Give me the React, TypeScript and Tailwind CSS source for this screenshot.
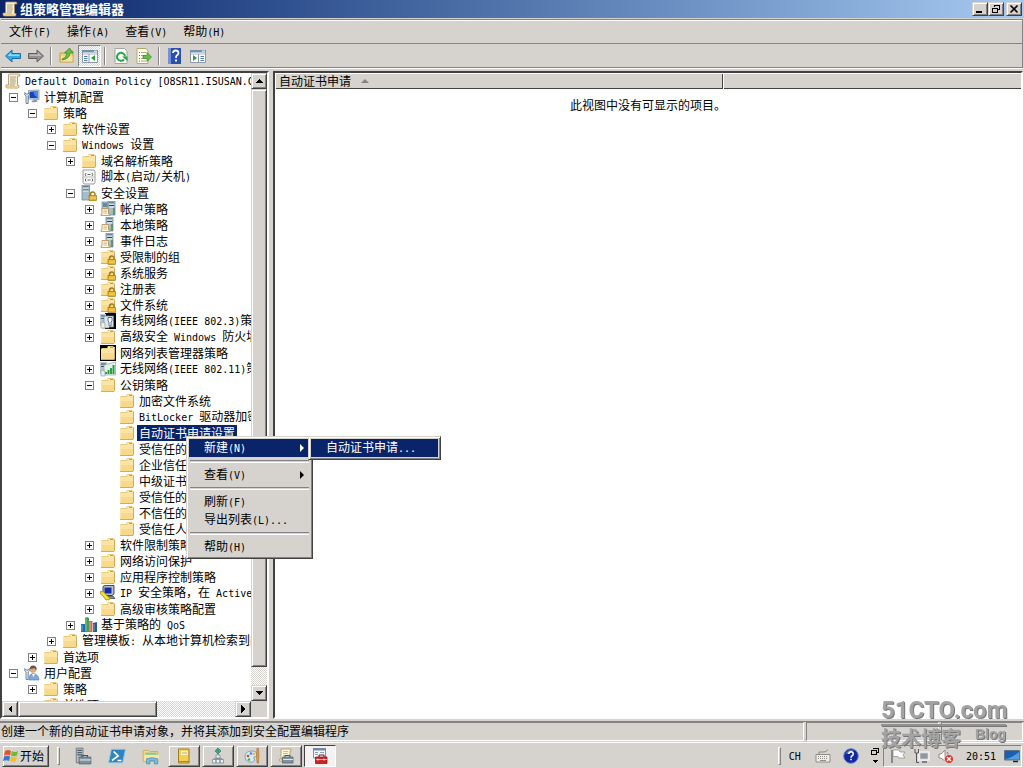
import type { ReactNode } from "react"

type Node = {
  label: string
  icon: string
  open?: boolean
  leaf?: boolean
  selected?: boolean
  children?: Node[]
}

const closed = (label: string, icon = "folder"): Node => ({ label, icon })
const leaf = (label: string, icon = "folder", selected = false): Node => ({ label, icon, leaf: true, selected })
const opened = (label: string, icon: string, children: Node[]): Node => ({ label, icon, open: true, children })

const tree: Node[] = [
  opened("计算机配置", "computer", [
    opened("策略", "folder", [
      closed("软件设置"),
      opened("Windows 设置", "folder", [
        closed("域名解析策略"),
        leaf("脚本(启动/关机)", "script"),
        opened("安全设置", "serverLock", [
          closed("帐户策略", "servers"),
          closed("本地策略", "serverDoc"),
          closed("事件日志", "serverDoc"),
          closed("受限制的组", "folderLock"),
          closed("系统服务", "folderLock"),
          closed("注册表", "folderLock"),
          closed("文件系统", "folderLock"),
          closed("有线网络(IEEE 802.3)策略", "wired"),
          closed("高级安全 Windows 防火墙"),
          leaf("网络列表管理器策略", "folderDark"),
          closed("无线网络(IEEE 802.11)策略", "wireless"),
          opened("公钥策略", "folder", [
            leaf("加密文件系统"),
            leaf("BitLocker 驱动器加密"),
            leaf("自动证书申请设置", "folder", true),
            leaf("受信任的根证书颁发机构"),
            leaf("企业信任"),
            leaf("中级证书颁发机构"),
            leaf("受信任的发布者"),
            leaf("不信任的证书"),
            leaf("受信任人"),
          ]),
          closed("软件限制策略"),
          closed("网络访问保护"),
          closed("应用程序控制策略"),
          closed("IP 安全策略，在 Active Directory", "ipsec"),
          closed("高级审核策略配置"),
        ]),
        closed("基于策略的 QoS", "qos"),
      ]),
      closed("管理模板: 从本地计算机检索到的"),
    ]),
    closed("首选项"),
  ]),
  opened("用户配置", "user", [closed("策略"), closed("首选项")]),
]

const raised =
  "border border-t-[#d6d3ce] border-l-[#d6d3ce] border-r-[#424142] border-b-[#424142] shadow-[inset_1px_1px_#fff,inset_-1px_-1px_#848284] bg-[#d6d3ce]"
const sunken = "border border-t-[#848284] border-l-[#848284] border-r-white border-b-white"
const checker = "bg-[repeating-conic-gradient(#fff_0_25%,#d6d3ce_0_50%)] bg-[length:2px_2px]"

// Latin runs are half the width of a Chinese character
function Text({ children }: { children: string }) {
  return (
    <span className="whitespace-pre">
      {children.split(/([\x20-\x7e]+)/).map((part, i) =>
        i % 2 ? (
          <span key={i} className="font-['DejaVu_Sans_Mono',monospace] text-[10px]">{part}</span>
        ) : (
          part
        )
      )}
    </span>
  )
}

function Svg({ children, size = "size-4" }: { children: ReactNode; size?: string }) {
  return (
    <svg viewBox="0 0 16 16" className={`${size} shrink-0`} aria-hidden="true">
      {children}
    </svg>
  )
}

const folderShape = (
  <>
    <path d="M7 3L8 1H13L14 2H15V14L14 15H1V4L2 3Z" fill="#ecca7c" />
    <path d="M1 4H8L9 3H14V14H1Z" fill="#fbe5a6" />
    <path d="M2 8H14V14H2Z" fill="#f8d98a" />
    <path d="M8 2H13V3H8Z" fill="#fff3cb" />
    <path d="M10 2H13V3H10Z" fill="#9aa39c" />
    <path d="M1 14.500H14M14.500 3V14" stroke="#d2ad5e" />
  </>
)

const lockShape = (
  <>
    <path d="M9.500 11V9.500Q9.500 7 11.800 7T14 9.500V11" fill="none" stroke="#a37818" strokeWidth="1.400" />
    <rect x="8" y="10.500" width="7.500" height="5" fill="#e8ae21" stroke="#9c6c10" strokeWidth=".6" />
    <path d="M9 12H15M9 13.500H15" stroke="#ffdf6b" strokeWidth=".6" />
  </>
)

const serverShape = (
  <>
    <rect x="6" y="0" width="7" height="14" fill="#a9bdc9" stroke="#66808f" strokeWidth=".7" />
    <path d="M7 2H12M7 4.500H12" stroke="#23485c" />
    <path d="M7 3H12M7 6H12" stroke="#f2f8fb" />
    <path d="M11 7H13V14H11Z" fill="#71838c" />
    <circle cx="11.500" cy="11.500" r="1" fill="#39c05a" />
  </>
)

const docShape = (
  <>
    <path d="M2 7.500H8.500V13H10V14.500H1V13H2Z" fill="#fff5dc" stroke="#b18f5c" strokeWidth=".8" />
    <path d="M3.500 9H7M3.500 10.500H7M3.500 12H7" stroke="#d4b787" strokeWidth=".8" />
  </>
)

const scrollShape = (
  <>
    <path d="M4 1H14Q15 1 15 3H12.500V12.500H14V14Q14 15 12.500 15H2.500Q1 15 1 13.500V12H3.500V3Q3.500 1 4 1Z" fill="#fcf0cc" stroke="#a48d58" strokeWidth=".8" />
    <path d="M5 4H11M5 6H10.500M5 8H11M5 10H10.500M4.500 12H10" stroke="#8c8c83" strokeWidth=".8" />
    <path d="M1.500 13H12V14.500H2.500Z" fill="#e7cb82" />
  </>
)

const monitorShape = (
  <>
    <path d="M4.500 1.500L15 1V10.500L4.500 10Z" fill="#d7dfe6" stroke="#71859b" strokeWidth=".7" />
    <path d="M5.700 2.700L14 2V9.200L5.700 9Z" fill="#1644ba" />
    <path d="M9.500 2.500L14 2V9Q10 7 9.500 2.500Z" fill="#4c86e8" />
    <path d="M7 12L12 10.500L14 12.500L9 13.500Z" fill="#8997a6" />
  </>
)

const toolShape = (
  <path d="M.8 3.500V6L2 7V14.500H4.200V7L5.300 6V3.500L4 5H2.200Z" fill="#dfe9f0" stroke="#527089" strokeWidth=".8" />
)

const icons: Record<string, ReactNode> = {
  folder: folderShape,
  folderLock: <>{folderShape}{lockShape}</>,
  folderDark: <><path d="M0 0H16V16H0Z" fill="#000" />{folderShape}</>,
  script: (
    <>
      <path d="M2 1H13L14 2.500V13.500L13 15H3L2 13.500Z" fill="#fafafa" stroke="#9a9a9a" />
      <path d="M5 4Q3.500 5.500 5 7M11 4Q12.500 5.500 11 7M5 9.500Q3.500 11 5 12.500M11 9.500Q12.500 11 11 12.500M6.500 5.500H9.500M6.500 11H9.500" fill="none" stroke="#555" strokeWidth=".9" />
      <path d="M2 8H14" stroke="#bbb" />
    </>
  ),
  serverLock: (
    <>
      <rect x="1" y="0" width="7.500" height="15" fill="#a6bdcb" stroke="#69818f" strokeWidth=".7" />
      <path d="M2 2H7.500M2 5H7.500" stroke="#23485c" />
      <path d="M2 3H7.500M2 6H7.500" stroke="#f2f8fb" />
      {lockShape}
    </>
  ),
  servers: (
    <>
      <rect x="2" y="1" width="6.500" height="9" fill="#b4c7d1" stroke="#66808f" strokeWidth=".7" />
      <path d="M3 3H7.500M3 5H7.500" stroke="#23485c" />
      <g transform="translate(2 0)">{serverShape}</g>
      {docShape}
    </>
  ),
  serverDoc: <>{serverShape}{docShape}</>,
  wired: (
    <>
      <path d="M5 0H16V16H5Z" fill="#000" />
      <rect x="0" y="1" width="6" height="12" fill="#b7c7d0" />
      <path d="M1 3H5M1 5.500H5" stroke="#45606f" />
      <path d="M4 3H13.500V14H9V15H2V13H4Z" fill="#dbe8ef" stroke="#768b98" strokeWidth=".7" />
      <path d="M8 4.500H12V8L11 9V13H9V9L8 8Z" fill="#fff" stroke="#3c5a6c" strokeWidth=".8" />
      <path d="M1 9L5 10V15H1Z" fill="#f3efe2" stroke="#97958a" strokeWidth=".6" />
    </>
  ),
  wireless: (
    <>
      <rect x="0" y="1" width="7" height="12" fill="#b7c7d0" />
      <path d="M1 3H6M1 5.500H6" stroke="#36505f" />
      <path d="M4 4L15.500 1V14H4Z" fill="#e3efe7" stroke="#8fa39b" strokeWidth=".7" />
      <path d="M6 13V11M8.500 13V9M11 13V7M13.500 13V4" stroke="#219a45" strokeWidth="1.900" />
      <path d="M1 9L5 10V15H1Z" fill="#e7eef2" stroke="#8297a3" strokeWidth=".6" />
    </>
  ),
  computer: <>{monitorShape}{toolShape}</>,
  user: (
    <>
      <path d="M5 15Q4.500 9 9 8.500Q14.500 9 15 15Z" fill="#7fa9d8" stroke="#4d78ad" strokeWidth=".6" />
      <circle cx="9" cy="4.500" r="3.300" fill="#dba67a" />
      <path d="M5.800 4Q6 .5 9.500.6Q13 1 12.500 5Q11 4.500 10.500 3Q8 4 5.800 4Z" fill="#655346" />
      <path d="M8 9L9.500 12L11 9Z" fill="#fff" />
      {toolShape}
    </>
  ),
  ipsec: (
    <>
      <path d="M3 1.500L5 .5H14V9L12 10.500H3Z" fill="#bcbfca" stroke="#222" strokeWidth=".8" />
      <path d="M4.500 2.500H11.500V8.500H4.500Z" fill="#112ca5" />
      <path d="M4 11H13L15 13.500H6Z" fill="#8a8e9a" stroke="#222" strokeWidth=".6" />
      <path d="M.5 6.500Q3 5 4.500 8L10 13.500L9 15L7.500 14.500L6 15L3 11Q0 10 .5 6.500Z" fill="#f5e332" stroke="#8b7a00" strokeWidth=".7" />
    </>
  ),
  qos: (
    <>
      <path d="M0 7H4V15H0Z" fill="#1d6dae" />
      <path d="M4 1L6 0L8 1V15H4Z" fill="#3f9e51" />
      <path d="M8 4H11.500V15H8Z" fill="#d7674a" />
      <path d="M12 6L16 5V15H12Z" fill="#245a93" />
      <path d="M1 8V14M5 2V14M9 5V14M13 7V14" stroke="#fff" strokeOpacity=".4" />
    </>
  ),
}

function TreeItem({ node }: { node: Node }) {
  return (
    <li>
      <div className="flex h-4 items-center gap-1">
        <span className="w-[15px] shrink-0 pl-1">
          {!node.leaf && (
            <button aria-label={node.open ? "折叠" : "展开"} className="block size-[9px]">
              <svg viewBox="0 0 9 9" className="size-[9px]" shapeRendering="crispEdges">
                <path d="M.5.5H8.500V8.500H.5Z" fill="#fff" stroke="#848284" />
                <path d={node.open ? "M2 4.500H7" : "M2 4.500H7M4.500 2V7"} stroke="#000" />
              </svg>
            </button>
          )}
        </span>
        <Svg>{icons[node.icon]}</Svg>
        <span className={node.selected ? "-mx-0.5 bg-[#0a246a] px-0.5 text-white" : ""}>
          <Text>{node.label}</Text>
        </span>
      </div>
      {node.children && (
        <ul className="pl-[19px]">
          {node.children.map((child, i) => <TreeItem key={i} node={child} />)}
        </ul>
      )}
    </li>
  )
}

function ScrollButton({ d, label }: { d: string; label: string }) {
  return (
    <button aria-label={label} className={`flex size-4 shrink-0 items-center justify-center ${raised}`}>
      <svg viewBox="0 0 8 8" className="size-2" shapeRendering="crispEdges"><path d={d} /></svg>
    </button>
  )
}

function Divider() {
  return <span className="mx-[3px] h-[18px] w-0.5 shrink-0 border-l border-l-[#848284] border-r border-r-white" />
}

function ToolButton({ label, pressed, children }: { label: string; pressed?: boolean; children: ReactNode }) {
  return (
    <button
      aria-label={label}
      className={`flex h-[22px] w-[23px] items-center justify-center ${pressed ? `${sunken} ${checker}` : ""}`}
    >
      <Svg>{children}</Svg>
    </button>
  )
}

const paneIcon = (arrow: string, left: boolean) => (
  <>
    <path d="M.5 2.500H15.500V14.500H.5Z" fill="#fff" stroke="#8e9aa8" />
    <path d="M0 2H16V4.500H0Z" fill="#7790ae" />
    <path d="M12 3.200H15" stroke="#fff" />
    <path d="M1 6H15" stroke="#a8b6c5" />
    <path d={left ? "M7 6V14" : "M8.500 6V14"} stroke="#8e9aa8" />
    <path d={left ? "M2 8.500H5.500M2 10.500H5.500M2 12.500H5.500" : "M10.500 8.500H14M10.500 10.500H14M10.500 12.500H14"} stroke="#4d7fb5" />
    <path d={arrow} fill="#2e9e3c" />
  </>
)

function Toolbar() {
  return (
    <div className="flex h-6 items-center border-b border-[#848284]">
      <ToolButton label="后退">
        <path d="M.5 8L7 2V5.500H15.500V10.500H7V14Z" fill="#38a9e4" stroke="#186fa7" />
        <path d="M2.500 8L6 4.500V6.500H14.500V8Z" fill="#8bdafb" />
      </ToolButton>
      <ToolButton label="前进">
        <path d="M15.500 8L9 2V5.500H.5V10.500H9V14Z" fill="#929292" stroke="#5e5e5e" />
        <path d="M13.500 8L10 4.500V6.500H1.500V8Z" fill="#bdbdbd" />
      </ToolButton>
      <Divider />
      <ToolButton label="上移">
        <path d="M1 5H7L8 3H14V14H1Z" fill="#f4d27b" stroke="#c39b45" />
        <path d="M2 8H13.500V13.500H2Z" fill="#fae29c" />
        <path d="M3 11Q7.500 10 8 5H5.500L10.500 0L14 5H11Q10.500 11 3 12Z" fill="#67bf3b" stroke="#35842a" strokeWidth=".7" />
      </ToolButton>
      <ToolButton label="显示/隐藏控制台树" pressed>{paneIcon("M13 7V13L9 10Z", true)}</ToolButton>
      <Divider />
      <ToolButton label="刷新">
        <path d="M2 .5H11.500L14 3V15.500H2Z" fill="#fff" stroke="#a0a8a0" />
        <path d="M11 11.500A4 4 0 1 1 12 8.500" fill="none" stroke="#2fa344" strokeWidth="2" />
        <path d="M9 8.500H14.500V13Z" fill="#2fa344" />
      </ToolButton>
      <ToolButton label="导出列表">
        <path d="M1 .5H10L12 3V15.500H1Z" fill="#fffdf0" stroke="#b8a86c" />
        <path d="M3 4.500H4M3 7.500H4M3 10.500H4M3 13H4" stroke="#3e8a3e" />
        <path d="M5 4.500H10M5 7.500H9M5 10.500H9M5 13H10" stroke="#b6a878" />
        <path d="M7 7.500H11V4.500L15.500 9L11 13.500V10.500H7Z" fill="#66c044" stroke="#38882b" strokeWidth=".7" />
      </ToolButton>
      <Divider />
      <ToolButton label="帮助">
        <path d="M1.500 0H14V16H1.500Z" fill="#2b4faf" />
        <path d="M1.500 0H4V16H1.500Z" fill="#6f90dc" />
        <path d="M6 5Q6 2.500 8.700 2.500T11.500 5Q11.500 6.500 9.800 7.500Q9 8 9 10" fill="none" stroke="#fff" strokeWidth="1.800" />
        <path d="M8 11.500H10V13.500H8Z" fill="#fff" />
      </ToolButton>
      <ToolButton label="显示/隐藏操作窗格">{paneIcon("M3 7V13L7 10Z", false)}</ToolButton>
    </div>
  )
}

function MenuItem({ label, active, arrow }: { label: string; active?: boolean; arrow?: boolean }) {
  return (
    <button className={`flex h-[18px] w-full items-center justify-between pr-1.5 pl-[15px] ${active ? "bg-[#0a246a] text-white" : ""}`}>
      <Text>{label}</Text>
      {arrow && (
        <svg viewBox="0 0 4 8" className="h-2 w-1" fill="currentColor"><path d="M0 0L4 4L0 8Z" /></svg>
      )}
    </button>
  )
}

function MenuLine() {
  return <div className="mx-px my-[3px] h-[3px] border-t border-b border-t-[#848284] border-b-white" />
}

function ContextMenu() {
  return (
    <>
      <div className={`absolute top-[436px] left-[186px] w-[127px] p-0.5 ${raised}`}>
        <MenuItem label="新建(N)" active arrow />
        <MenuLine />
        <MenuItem label="查看(V)" arrow />
        <MenuLine />
        <MenuItem label="刷新(F)" />
        <MenuItem label="导出列表(L)..." />
        <MenuLine />
        <MenuItem label="帮助(H)" />
      </div>
      <div className={`absolute top-[436px] left-[308px] w-[133px] p-0.5 ${raised}`}>
        <MenuItem label="自动证书申请..." active />
      </div>
    </>
  )
}

function TaskButton({ label, pressed, children }: { label: string; pressed?: boolean; children: ReactNode }) {
  return (
    <button
      aria-label={label}
      className={`flex h-[22px] w-8 items-center justify-center ${
        pressed ? "border border-t-[#424142] border-l-[#424142] border-r-white border-b-white bg-[#f4f3f1]" : raised
      }`}
    >
      <Svg>{children}</Svg>
    </button>
  )
}

const toolbox = (
  <>
    <path d="M7 9V7.500H12V9" fill="none" stroke="#48525a" />
    <path d="M4.500 9H15V15H4.500Z" fill="#81929f" stroke="#4e5d68" strokeWidth=".7" />
    <path d="M5 11.500H15" stroke="#dce4e9" />
  </>
)

function Taskbar() {
  return (
    <footer className="flex h-[26px] shrink-0 items-center border-t border-white pl-0.5">
      <button className={`flex h-[22px] w-[47px] items-center gap-px ${raised}`}>
        <Svg>
          <path d="M2 3Q5 1 8 3L7 7.500Q4 6 1 7.500Z" fill="#e65527" />
          <path d="M9 3Q12 5 15 3L14 7.500Q11 9 8 7.500Z" fill="#71b935" />
          <path d="M1 8.500Q4 7 7 8.500L6 13Q3 11.500 0 13Z" fill="#3976d2" />
          <path d="M8 8.500Q11 10 14 8.500L13 13Q10 15 7 13Z" fill="#f7bd27" />
        </Svg>
        开始
      </button>
      <span className="mr-3.5 ml-2 h-[18px] w-[3px] border border-t-white border-l-white border-r-[#848284] border-b-[#848284]" />
      <div className="flex items-center gap-4 pr-2">
        <button aria-label="服务器管理器" className="flex">
          <Svg size="size-[18px]">
            <path d="M2 1H8V14H2Z" fill="#b5bec3" stroke="#6d7a81" strokeWidth=".8" />
            <path d="M3 3H7M3 5H7M3 7H7" stroke="#50616b" />
            {toolbox}
          </Svg>
        </button>
        <button aria-label="PowerShell" className="flex">
          <Svg size="size-[18px]">
            <path d="M3 2H15.500L13 14H.5Z" fill="#2f83be" stroke="#90c6e5" strokeWidth=".8" />
            <path d="M5 4L9 8L3.500 12M8.500 12H12" fill="none" stroke="#fff" strokeWidth="1.500" />
          </Svg>
        </button>
        <button aria-label="资源管理器" className="flex">
          <Svg size="size-[18px]">
            <path d="M1 3H6L7 4H14V13H1Z" fill="#f4d77d" stroke="#caa656" strokeWidth=".7" />
            <path d="M3 5H13V8H3Z" fill="#85c9a2" />
            <path d="M2 7H15V12H2Z" fill="#f9e79f" />
            <path d="M4 15V10.500Q9 8.500 14 10.500V15H11V12H7V15Z" fill="#77bde2" stroke="#4189b3" strokeWidth=".6" />
          </Svg>
        </button>
      </div>
      <div className="flex gap-0.5">
        <TaskButton label="记事本">
          <path d="M2.500 1H13V15H2.500Z" fill="#f5cf52" stroke="#9e7c27" />
          <path d="M5 3H12V7H5Z" fill="#fff8cf" />
          <path d="M2 13.500H13" stroke="#b08627" />
          <path d="M6 5H11" stroke="#c0a95d" />
        </TaskButton>
        <TaskButton label="网络">
          <path d="M8 0L11 3L8 6L5 3Z" fill="#3ba47e" stroke="#24705b" strokeWidth=".6" />
          <path d="M8 6V8M4 12V10.500H12V12" fill="none" stroke="#8c979e" />
          <path d="M6 7H10V10H6ZM2.500 11.500H6V15H2.500ZM6 11.500H10V15H6ZM10 11.500H13.500V15H10Z" fill="#eef2f4" stroke="#7c8a93" strokeWidth=".8" />
        </TaskButton>
        <TaskButton label="画图">
          <path d="M1 9Q1 3 8 3Q13 3 13 7Q12 9 10 9Q9 11 11 12Q9 15 5 14Q1 13 1 9Z" fill="#d9eaf4" stroke="#6b94ad" strokeWidth=".8" />
          <circle cx="4" cy="8" r="1.300" fill="#c94839" /><circle cx="7" cy="5.500" r="1.300" fill="#3a8dd1" />
          <circle cx="5" cy="11.500" r="1.300" fill="#4dab4b" /><circle cx="10" cy="6" r="1.200" fill="#e8b730" />
          <path d="M13 0H14.500L15 7L14.500 15H13L12.500 7Z" fill="#e39a42" stroke="#a36521" strokeWidth=".5" />
        </TaskButton>
        <TaskButton label="组策略管理">
          <path d="M3 1H13V3H12V11H1.500V13H8V11H3Z" fill="#fff5d8" stroke="#ae955e" strokeWidth=".8" />
          <path d="M5 3.500H10M5 5.500H10M5 7.500H10" stroke="#c5ae7b" strokeWidth=".8" />
          {toolbox}
        </TaskButton>
        <TaskButton label="组策略管理编辑器" pressed>
          <path d="M1.500.5H13.500V10H1.500Z" fill="#f6f8fa" stroke="#8695a5" />
          <path d="M1 0H14V2.500H1Z" fill="#6f89a8" />
          <path d="M3 4.500H6M8 4.500H12M3 6.500H6" stroke="#8ba0b4" />
          <path d="M7 9V7H12V9" fill="none" stroke="#6a1414" />
          <path d="M3.500 9H15V15.500H3.500Z" fill="#c92525" stroke="#811212" strokeWidth=".7" />
          <path d="M4 11.500H15" stroke="#f6a2a2" />
          <path d="M6 10.500V12.500M12 10.500V12.500" stroke="#fff" />
        </TaskButton>
      </div>
      <div className="ml-auto flex h-full items-center">
        <span className="mr-2 h-[18px] w-[3px] border border-t-white border-l-white border-r-[#848284] border-b-[#848284]" />
        <button className="mr-3.5"><Text>CH</Text></button>
        <button aria-label="键盘" className="mr-3">
          <Svg>
            <path d="M1 6.500H15V14H1Z" fill="#f0efed" stroke="#8c8b88" />
            <path d="M3 8.500H13M3 10.500H13" stroke="#8c8b88" strokeDasharray="1 1" />
            <path d="M5 12.500H11M4 6V4H9Q11 4 13 1.500" fill="none" stroke="#8c8b88" />
          </Svg>
        </button>
        <button aria-label="帮助" className="mr-3">
          <Svg>
            <circle cx="8" cy="8" r="7.300" fill="#12299b" stroke="#6e83cd" />
            <path d="M2.500 6Q5 .5 11 2.500Q8 6 2.500 6Z" fill="#5470d0" />
            <path d="M5.800 6Q6 3.800 8 3.800T10.300 6Q10.300 7.200 8.800 8Q8 8.500 8 9.700" fill="none" stroke="#fff" strokeWidth="1.500" />
            <path d="M7.200 10.800H8.800V12.300H7.200Z" fill="#fff" />
          </Svg>
        </button>
        <button aria-label="语言栏选项" className="mr-1">
          <svg viewBox="0 0 8 18" className="h-[18px] w-2" shapeRendering="crispEdges">
            <path d="M2.500 2V1.500H7.500V5.500H6M.5 3.500H5.500V7.500H.5Z" fill="none" stroke="#000" />
            <path d="M1 13H7L4 16Z" />
          </svg>
        </button>
        <div className={`mr-0.5 flex h-[22px] items-center pr-px pl-1.5 ${sunken}`}>
          <button aria-label="操作中心" className="mr-2 flex">
            <Svg>
              <path d="M2 2V15" stroke="#6d7178" strokeWidth="1.500" />
              <path d="M3 2H9L10 4H15L13 7L15 10H9L8 8.500H3Z" fill="#fff" stroke="#8d9095" strokeWidth=".8" />
            </Svg>
          </button>
          <button aria-label="网络" className="mr-2 flex">
            <Svg>
              <path d="M5 4H15V12H5Z" fill="#c4c8cd" stroke="#fff" strokeWidth="1.200" />
              <path d="M6.500 5.500H13.500V10.500H6.500Z" fill="#91979f" />
              <path d="M8 14H13" stroke="#666" strokeWidth="1.500" />
              <path d="M1 1V5H2.500V14.500H5M4.500 1V5H2.500" fill="none" stroke="#555" />
            </Svg>
          </button>
          <button aria-label="音量" className="mr-3 flex">
            <Svg>
              <path d="M1 6H3L7 2V13L3 10H1Z" fill="#fff" stroke="#777" strokeWidth=".8" />
              <path d="M9 4Q11 6 10 8" fill="none" stroke="#777" />
              <circle cx="11" cy="11" r="4.500" fill="#dd3429" stroke="#fff" strokeWidth=".6" />
              <path d="M9 9L13 13M13 9L9 13" stroke="#fff" strokeWidth="1.400" />
            </Svg>
          </button>
          <span className="mr-2"><Text>20:51</Text></span>
          <button aria-label="显示桌面" className="flex">
            <Svg>
              <path d="M.5 2.500H15.500V12H.5Z" fill="#1c5fae" stroke="#5d7288" />
              <path d="M1 11Q8 10 15 4V11.500H1Z" fill="#4f9ce2" />
              <path d="M9 13.500H14" stroke="#222" strokeWidth="1.500" />
            </Svg>
          </button>
        </div>
      </div>
    </footer>
  )
}

function App() {
  return (
    <div className="relative flex h-screen flex-col overflow-hidden bg-[#d6d3ce] font-['Noto_Sans_CJK_SC',sans-serif] text-[12px] leading-4 text-black select-none">
      <header className="flex h-[18px] shrink-0 items-center bg-linear-to-r from-[#0a246a] to-[#a6caf0] px-0.5 text-white">
        <Svg>{scrollShape}</Svg>
        <h1 className="ml-0.5 flex-1 text-[13px] font-bold">组策略管理编辑器</h1>
        <button aria-label="最小化" className={`flex h-3.5 w-4 items-center justify-center ${raised}`}>
          <svg viewBox="0 0 10 10" className="size-2.5" shapeRendering="crispEdges"><path d="M1 7H7V9H1Z" /></svg>
        </button>
        <button aria-label="还原" className={`mr-0.5 flex h-3.5 w-4 items-center justify-center ${raised}`}>
          <svg viewBox="0 0 10 10" className="size-2.5" shapeRendering="crispEdges">
            <path d="M3.500 3V1.500H8.500V5.500H7M3 1H9M1.500 4.500H6.500V8.500H1.500ZM1 4H7" fill="none" stroke="#000" />
          </svg>
        </button>
        <button aria-label="关闭" className={`flex h-3.5 w-4 items-center justify-center ${raised}`}>
          <svg viewBox="0 0 10 10" className="size-2.5"><path d="M1.500 1.500L8.500 8.500M8.500 1.500L1.500 8.500" stroke="#000" strokeWidth="1.600" /></svg>
        </button>
      </header>

      <div className="mx-px mt-px shrink-0 border-t border-r border-[#848284] shadow-[0_1px_#fff]">
        <nav className="flex h-6 items-center gap-4 border-t border-b border-t-white border-b-[#848284] pl-2">
          {["文件(F)", "操作(A)", "查看(V)", "帮助(H)"].map(label => (
            <button key={label}><Text>{label}</Text></button>
          ))}
        </nav>
        <Toolbar />
      </div>

      <main className="mt-[3px] flex min-h-0 flex-1">
        <section className="flex w-[269px] shrink-0 flex-col border-2 border-t-[#424142] border-r-white border-b-white border-l-[#424142] bg-white">
          <div className="flex min-h-0 flex-1">
            <div className="min-w-0 flex-1 overflow-hidden pl-[3px] whitespace-nowrap">
              <div className="flex h-4 items-center gap-1">
                <Svg>{scrollShape}</Svg>
                <Text>Default Domain Policy [O8SR11.ISUSAN.COM]</Text>
              </div>
              <ul>{tree.map((node, i) => <TreeItem key={i} node={node} />)}</ul>
            </div>
            <div className={`flex w-4 shrink-0 flex-col ${checker}`}>
              <ScrollButton label="向上滚动" d="M4 2L8 6H0Z" />
              <div className="min-h-0 flex-1"><div className={`h-[97%] ${raised}`} /></div>
              <ScrollButton label="向下滚动" d="M0 2H8L4 6Z" />
            </div>
          </div>
          <div className="flex h-4 shrink-0 bg-[#d6d3ce]">
            <div className={`flex flex-1 ${checker}`}>
              <ScrollButton label="向左滚动" d="M2 4L6 0V8Z" />
              <div className="flex-1"><div className={`h-4 w-[64%] ${raised}`} /></div>
              <ScrollButton label="向右滚动" d="M2 0L6 4L2 8Z" />
            </div>
            <span className="w-4" />
          </div>
        </section>

        <section className="mr-px ml-1 flex min-w-0 flex-1 flex-col border-2 border-t-[#424142] border-r-white border-b-white border-l-[#424142] bg-white">
          <table className="w-full table-fixed border-collapse">
            <thead>
              <tr className="h-4 bg-[#d6d3ce] text-left">
                <th className="w-[60%] p-0 pl-1 font-normal shadow-[inset_1px_1px_#fff,inset_-1px_-1px_#424142]">
                  <button className="flex h-4 items-center gap-2.5">
                    自动证书申请
                    <svg viewBox="0 0 8 4" className="h-1 w-2" fill="#848284"><path d="M4 0L8 4H0Z" /></svg>
                  </button>
                </th>
                <th className="p-0 shadow-[inset_1px_1px_#fff,inset_0_-1px_#424142]" aria-label="空列" />
              </tr>
            </thead>
            <tbody>
              <tr><td colSpan={2} className="p-0 pt-2 text-center">此视图中没有可显示的项目。</td></tr>
            </tbody>
          </table>
        </section>
      </main>

      <div className="mt-0.5 flex h-[21px] shrink-0 gap-0.5 border-t border-[#848284] pb-px">
        <p className={`flex-1 pl-px ${sunken} border-l-0`}>创建一个新的自动证书申请对象，并将其添加到安全配置编辑程序</p>
        <span className={`w-[13%] ${sunken}`} />
        <span className={`mr-px w-[8%] ${sunken}`} />
      </div>

      <Taskbar />

      <ContextMenu />

      <div className="pointer-events-none absolute right-[18px] bottom-[18px] w-[125px] text-[#a3a3a3] drop-shadow-[1px_1px_#777]">
        <div className="border-b-2 border-[#929292] font-['Roboto',sans-serif] text-[24px] leading-7 font-bold">51CTO.com</div>
        <div className="flex justify-between font-bold">
          <span className="text-[20px] leading-6">技术博客</span>
          <span className="font-['Liberation_Sans',sans-serif] text-[14px]">Blog</span>
        </div>
      </div>
    </div>
  )
}

export default App
